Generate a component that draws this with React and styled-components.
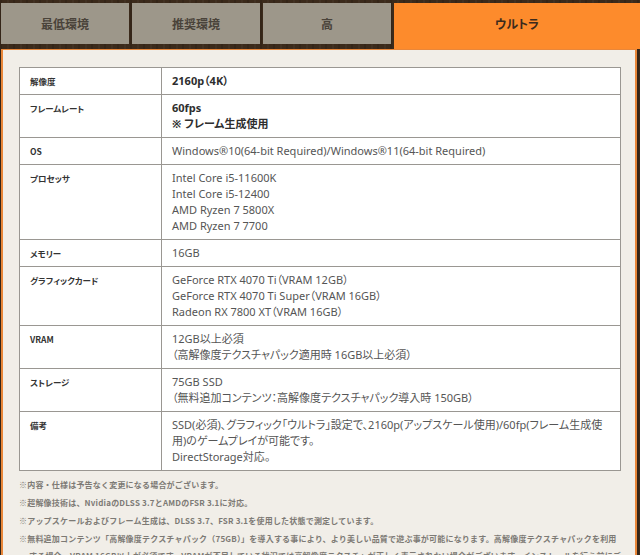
import React from 'react'
import styled, { createGlobalStyle } from 'styled-components'

const Global = createGlobalStyle`
  body {
    margin: 0;
    background: #3a2a1c;
    font-family: "Noto Sans", "Noto Sans CJK JP", sans-serif;
    font-feature-settings: "palt";
  }
`;

const Page = styled.div`
  width: 640px;
  height: 555px;
  overflow: hidden;
  background-color: #3b2a1b;
  background-image:
    repeating-linear-gradient(90deg, rgba(0,0,0,0.12) 0 2px, transparent 2px 7px, rgba(255,255,255,0.03) 7px 9px, transparent 9px 13px);
`;

const Tabs = styled.div`
  display: grid;
  grid-template-columns: 128px 128px 128px 1fr;
  column-gap: 3px;
  align-items: start;
  padding: 3px 0 0 1px;
`;

const Tab = styled.div`
  height: ${p => (p.active ? '46px' : '41px')};
  padding-bottom: ${p => (p.active ? '5px' : '0')};
  box-sizing: border-box;
  background: ${p => (p.active ? '#fd8b2c' : '#9d978a')};
  color: ${p => (p.active ? '#3c2a1c' : '#4a433a')};
  font-family: "Noto Sans CJK JP", sans-serif;
  font-weight: 700;
  font-size: 12px;
  display: flex;
  align-items: center;
  justify-content: center;
`;

const Panel = styled.div`
  margin: 0 3px 0 1px;
  background: #f1eee8;
  border: 2px solid #e9873a;
  border-top-width: 1px;
  padding: 17px 14px 12px 16px;
`;

const Table = styled.table`
  width: 100%;
  border-collapse: collapse;
  background: #fff;
  border: 1px solid #9a9792;
`;

const Label = styled.th`
  width: 121px;
  text-align: left;
  vertical-align: top;
  border: 1px solid #9a9792;
  padding: 7px 10px 5px 10px;
  font-family: "Noto Sans CJK JP", sans-serif;
  font-size: 8.5px;
  line-height: 12px;
  font-weight: 700;
  color: #333;
`;

const Value = styled.td`
  border: 1px solid #9a9792;
  padding: 5px 10px 5px 10px;
  font-size: 11px;
  line-height: 16px;
  color: ${p => (p.strong ? '#2e2e2e' : '#555')};
  font-weight: ${p => (p.strong ? 700 : 400)};
  vertical-align: top;
`;

const Notes = styled.ul`
  list-style: none;
  margin: 5px 0 0 0;
  padding: 0;
`;

const Note = styled.li`
  font-family: "Noto Sans CJK JP", sans-serif;
  font-feature-settings: normal;
  font-size: 8px;
  line-height: 17px;
  color: #7d7a75;
  font-weight: 700;
  letter-spacing: 0.2px;
  padding-left: 10px;
  text-indent: -10px;
  margin-bottom: 1px;
`;

const rows = [
  { label: '解像度', strong: true, lines: ['2160p（4K）'] },
  { label: 'フレームレート', strong: true, lines: ['60fps', '※ フレーム生成使用'] },
  { label: 'OS', lines: ['Windows®10(64-bit Required)/Windows®11(64-bit Required)'] },
  { label: 'プロセッサ', lines: ['Intel Core i5-11600K', 'Intel Core i5-12400', 'AMD Ryzen 7 5800X', 'AMD Ryzen 7 7700'] },
  { label: 'メモリー', lines: ['16GB'] },
  { label: 'グラフィックカード', lines: ['GeForce RTX 4070 Ti（VRAM 12GB）', 'GeForce RTX 4070 Ti Super（VRAM 16GB）', 'Radeon RX 7800 XT（VRAM 16GB）'] },
  { label: 'VRAM', lines: ['12GB以上必須', '（高解像度テクスチャパック適用時 16GB以上必須）'] },
  { label: 'ストレージ', lines: ['75GB SSD', '（無料追加コンテンツ：高解像度テクスチャパック導入時 150GB）'] },
  { label: '備考', lines: ['SSD(必須)、グラフィック「ウルトラ」設定で、2160p(アップスケール使用)/60fp(フレーム生成使用)のゲームプレイが可能です。', 'DirectStorage対応。'] },
];

const notes = [
  '※内容・仕様は予告なく変更になる場合がございます。',
  '※超解像技術は、NvidiaのDLSS 3.7とAMDのFSR 3.1に対応。',
  '※アップスケールおよびフレーム生成は、DLSS 3.7、FSR 3.1を使用した状態で測定しています。',
  '※無料追加コンテンツ「高解像度テクスチャパック（75GB）」を導入する事により、より美しい品質で遊ぶ事が可能になります。高解像度テクスチャパックを利用する場合、VRAM 16GB以上が必須です。VRAMが不足している状況では高解像度テクスチャが正しく表示されない場合がございます。インストールを行う前にご確認ください。',
];

export default function App() {
  return (
    <Page>
      <Global />
      <Tabs>
        <Tab>最低環境</Tab>
        <Tab>推奨環境</Tab>
        <Tab>高</Tab>
        <Tab active>ウルトラ</Tab>
      </Tabs>
      <Panel>
        <Table>
          <tbody>
            {rows.map(r => (
              <tr key={r.label}>
                <Label>{r.label}</Label>
                <Value strong={r.strong}>
                  {r.lines.map((l, i) => (
                    <div key={i}>{l}</div>
                  ))}
                </Value>
              </tr>
            ))}
          </tbody>
        </Table>
        <Notes>
          {notes.map((n, i) => (
            <Note key={i}>{n}</Note>
          ))}
        </Notes>
      </Panel>
    </Page>
  )
}
